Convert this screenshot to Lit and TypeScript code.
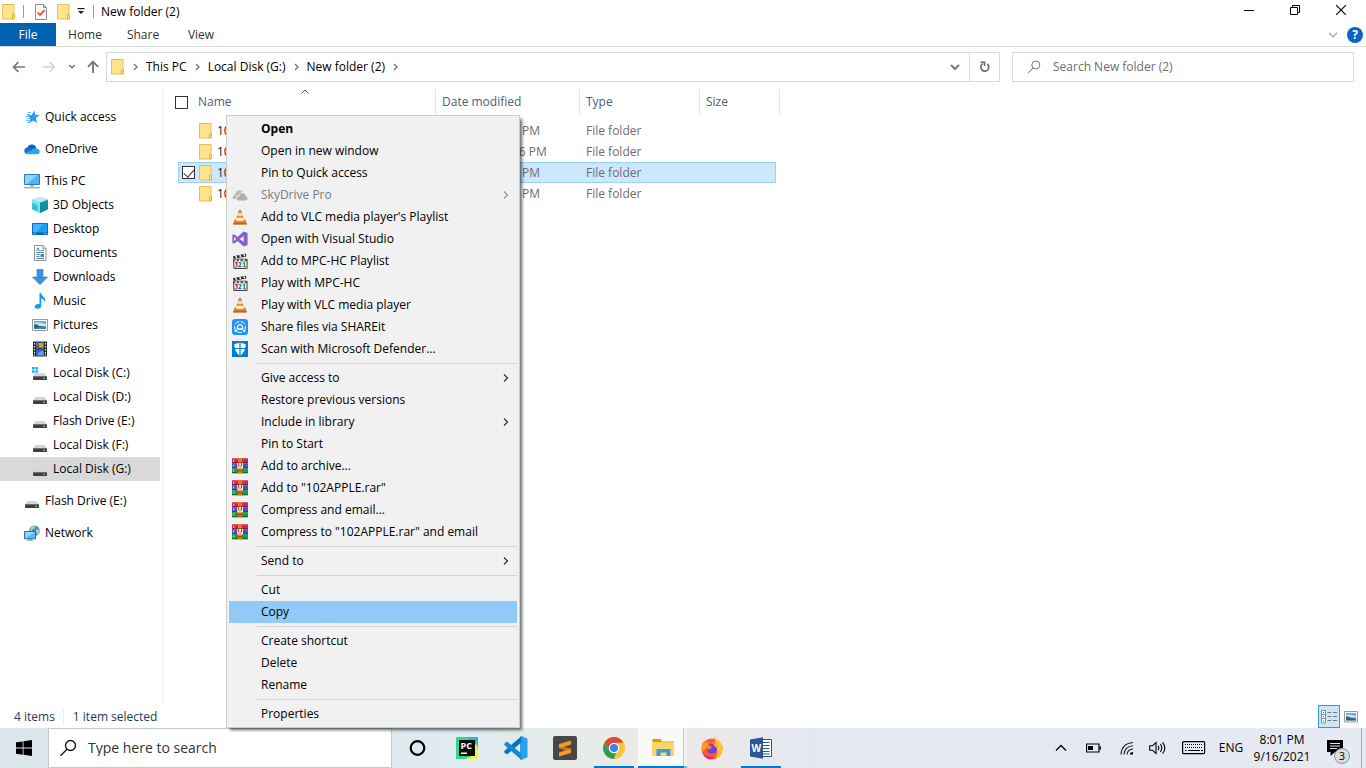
import { LitElement, html, css, svg, nothing, TemplateResult } from "lit";
import { customElement, property, state } from "lit/decorators.js";
import { classMap } from "lit/directives/class-map.js";

type Glyph = { w: number; h: number; body: TemplateResult };

const cone = svg`
  <path d="M7 1.5h2l3.6 9.5H3.4z" fill="#f08a1d"/>
  <path d="M6 4.5h4l.9 2.3H5.1zM4.4 8.7h7.2l.8 1.9H3.6z" fill="#f6ece0"/>
  <path d="M7.2.8h1.6l.6 1.7H6.6z" fill="#8d8f94"/>
  <path d="M2.6 10.5h10.8l1.4 4.8H1.2z" fill="#e57c14"/>
  <path d="M4 10h8l.4 1.500q-4.400 1.500-8.800 0z" fill="#f9e3cc"/>
  <path d="M1.4 14.2h13.2l.3 1.3H1.1z" fill="#b85c0c"/>`;

const clapper = svg`
  <path d="M1 3.2 13.8.8l.6 2.6L1.6 5.8z" fill="#222"/>
  <path d="m3 3 1.6-.3.9 2-1.7.3zM7 2.2l1.7-.3.8 2-1.6.3zM11 1.5l1.6-.3.8 1.9-1.5.3z" fill="#f4f4f4"/>
  <path d="M1.5 6.2h13.6v9.3H1.9z" fill="#e8ebee" stroke="#333" stroke-width=".9"/>
  <path d="M2 6.6h12.8v1.6H2z" fill="#444"/>
  <path d="M3.2 6.6h1.6v1.6H3.2zM7 6.6h1.6v1.6H7zM11 6.6h1.6v1.6H11z" fill="#fff"/>
  <path d="M3 9.6h2.3l-1 1.6q1.6.5.6 2t-2.1.4" fill="none" stroke="#d0392b" stroke-width="1.1"/>
  <path d="M6.8 10.2q1.8-1.4 2.1.1 0 1-2 3.3h2.4" fill="none" stroke="#2870b8" stroke-width="1.1"/>
  <path d="m11 10.3 1.4-.8v4.2m-1.3 0H14" fill="none" stroke="#3a8b3a" stroke-width="1.1"/>`;

const drive = svg`
  <path d="M3.2 8h9.6l2 3.2H1.2z" fill="#d4d6d8"/>
  <path d="M1.1 11h13.8v4H1.1z" fill="#3c3f42"/>
  <path d="M1.1 11h13.8v.9H1.1z" fill="#77797c"/>
  <path d="M11 12.7h1.7v1.3H11z" fill="#3df04a"/>`;

const picture = svg`
  <path d="M.5 2.5h15v11H.5z" fill="#fff" stroke="#999"/>
  <path d="M2 4h12v8H2z" fill="#5fa9e6"/>
  <path d="M2 6q4-2 12 1v2H2z" fill="#c9e4f5"/>
  <path d="M2 7.5q3-.8 5.5 1.4L14 10v2H2z" fill="#2e6a66"/>
  <path d="M6 10.6 14 9.4V12H2v-.6z" fill="#4585b5"/>`;

const rar = svg`
  <path d="M0 0h16v5.3H0z" fill="#c9245b"/><path d="M0 0h16v1.2H0z" fill="#e3577f"/><path d="M0 4.3h16v1H0z" fill="#82133a"/>
  <path d="M0 5.3h16v5H0z" fill="#4d51bb"/><path d="M0 9.4h16v.9H0z" fill="#2c2f78"/>
  <path d="M0 10.3h16V15H0z" fill="#1f9a3f"/><path d="M0 14.3h16v1H0z" fill="#0d5c22"/>
  <path d="M1.2 1.8h1v2.2h-1zM1.2 6.4h1v2.2h-1zM1.2 11.4h1v2.2h-1z" fill="#ffe14a"/>
  <path d="M6 0h4.2v15.3H6z" fill="#e8761c"/><path d="M6 4.3h4.2v1H6zM6 12.2h4.2v1H6z" fill="#8e3f0a"/>
  <path d="M5.200 5h5.800v5.300H5.200z" fill="#f6ece8"/><path d="M6.700 5v3.500M9.500 5v3.500" fill="none" stroke="#c03a2c"/><path d="M7.500 7h1.200v3H7.500z" fill="#b9a9a4"/>`;

const globeMonitor = svg`
  <circle cx="10.5" cy="5.8" r="5.3" fill="#4f8fb8"/>
  <path d="M7.2 2.2q3-1.9 4.4-.7-.8 2.4-3 2.8-1 2-2.5 1.5zM12 5l3.400-.8q.6 3-1.600 5.200Q11.600 8 12 5z" fill="#a9d0c8"/>
  <path d="M.5 6.500h11v7.300H.5z" fill="#52bdf5" stroke="#28709f"/>
  <path d="M1 7h9.800L2 13H1z" fill="#8fd7fb"/>
  <path d="M4.500 14h3v1.200h-3zM3 15h6v.8H3z" fill="#8795a1"/>`;

const G: Record<string, Glyph> = {
  folder: { w: 14, h: 16, body: svg`
    <path d="M.5.5h11.500v14.500H.5z" fill="#ffe48f" stroke="#e8c04a"/>
    <path d="M10.500 10.500h2v4.500h-2z" fill="#fbe08a" stroke="#e3b63c"/>` },
  props: { w: 12, h: 16, body: svg`
    <path d="M.5.5h8l3 3v12H.5z" fill="#f8f8f8" stroke="#8c8c8c"/><path d="M8.500.5v3h3" fill="none" stroke="#8c8c8c"/>
    <path d="m2.700 8.500 2.300 2.500 4.500-4.800" fill="none" stroke="#e8501e" stroke-width="1.800"/>` },
  qat: { w: 8, h: 7, body: svg`<path d="M.5 0h7v1.300h-7zM1 3h6L4 6z" fill="#222"/>` },
  min: { w: 10, h: 10, body: svg`<path d="M0 5h10v1H0z" fill="#000"/>` },
  restore: { w: 10, h: 10, body: svg`<path d="M2.500 2V.5h7v7H8M.5 2.500h7v7h-7z" fill="none" stroke="#000"/>` },
  close: { w: 10, h: 10, body: svg`<path d="m0 0 10 10M10 0 0 10" fill="none" stroke="#000" stroke-width="1.100"/>` },
  chevDownThin: { w: 10, h: 6, body: svg`<path d="m1 .8 4 4 4-4" fill="none" stroke="#999" stroke-width="1.200"/>` },
  chevDown: { w: 10, h: 7, body: svg`<path d="m1 1 4 4 4-4" fill="none" stroke="#777" stroke-width="2"/>` },
  chevSmall: { w: 8, h: 6, body: svg`<path d="m1.200 1 2.800 2.800L6.800 1" fill="none" stroke="#777" stroke-width="1.500"/>` },
  chevRight: { w: 5, h: 8, body: svg`<path d="m1 1 3 3-3 3" fill="none" stroke="#777" stroke-width="1.400"/>` },
  menuArrow: { w: 6, h: 10, body: svg`<path d="m1 1.500 3.500 3.500L1 8.500" fill="none" stroke="currentColor" stroke-width="1.200" opacity=".8"/>` },
  sortUp: { w: 8, h: 5, body: svg`<path d="m.5 4.500 3.500-3.500 3.500 3.500" fill="none" stroke="#555"/>` },
  back: { w: 14, h: 12, body: svg`<path d="M13 6H2M6.500 1l-5 5 5 5" fill="none" stroke="#777" stroke-width="1.700"/>` },
  forward: { w: 14, h: 12, body: svg`<path d="M1 6h11M7.500 1l5 5-5 5" fill="none" stroke="#d2d2d2" stroke-width="1.500"/>` },
  up: { w: 12, h: 14, body: svg`<path d="M6 13V2M1 6.800 6 1.700l5 5.100" fill="none" stroke="#777" stroke-width="1.900"/>` },
  refresh: { w: 12, h: 12, body: svg`<path d="M4 2.600A4 4 0 1 0 8.300 3" fill="none" stroke="#666" stroke-width="1.600"/><path d="M1.600 1.200h4V5" fill="none" stroke="#666" stroke-width="1.500"/>` },
  search: { w: 14, h: 14, body: svg`<circle cx="8.800" cy="5" r="4" fill="none" stroke="#777"/><path d="M6 8 1 13" stroke="#777" fill="none"/>` },
  bigSearch: { w: 18, h: 18, body: svg`<circle cx="11.500" cy="6.500" r="5" fill="none" stroke="#111" stroke-width="1.300"/><path d="M8 10.200 1.500 16.700" stroke="#111" stroke-width="1.300" fill="none"/>` },
  star: { w: 16, h: 16, body: svg`
    <path d="m10.500 1.500.7 4.300 4.500.2-3.700 3 1 5-3.800-2.600L5 14.300l1.200-4.800L3.500 6l4 .2z" fill="#2b9ceb"/>
    <path d="M4 3.500h3M2.500 5.500h3M1.500 7.500h4M2.500 9.500h3M2 11.500h3.500M3 13.500h2" stroke="#6bbdf3"/>` },
  cloud: { w: 16, h: 16, body: svg`
    <path d="M3 8.500q.5-5 5-5 3.500.2 4.500 3.700l-5 2.500z" fill="#0b62bd"/>
    <path d="M.3 10q0-3.500 3.700-3.600l5.500 3-6 3.600Q.5 13 .3 10z" fill="#1274d1"/>
    <path d="M7 9.500q2.500-3 6-1.800 2.700.3 2.700 2.900 0 2.600-2.700 2.600h-9q-1.700 0-3-1.200z" fill="#2ba5ea"/>` },
  pc: { w: 16, h: 16, body: svg`
    <path d="M.5 1.500h15v10H.5z" fill="#4db4f5" stroke="#2d7cae"/><path d="M1 2h13L3 11H1z" fill="#8fd2fa"/>
    <path d="M6 12h4v1.500H6z" fill="#9aa5ae"/><path d="M0 14.200h16v1.100H0z" fill="#8795a1"/>` },
  cube: { w: 16, h: 16, body: svg`
    <path d="m8 0 8 2.800v9.500L8 16l-8-3.700V2.800z" fill="#38c0d4"/><path d="m8 5.500 8-2.700v9.500L8 16z" fill="#0e8fa8"/>
    <path d="m0 2.800 8 2.700V16l-2.500-1.200V8L0 6z" fill="#7fe0ea"/><path d="m8 0 8 2.800-8 2.700-8-2.700z" fill="#b6eff4"/>` },
  desktop: { w: 16, h: 16, body: svg`
    <path d="M.5 2.500h15v11H.5z" fill="#1c9df5" stroke="#0b6fbe"/><path d="M1 3h10l-6 8H1z" fill="#3fb3ff"/>
    <path d="M1 11.500h14V13H1z" fill="#0a5ea8"/><path d="M2 12h1.500v.8H2zM11.500 12h1v.8h-1zM13.300 12h1v.8h-1z" fill="#fff"/>` },
  doc: { w: 16, h: 16, body: svg`
    <path d="M2.500.5h8.500l3 3v12H2.500z" fill="#fff" stroke="#8b9299"/><path d="M10.800.5v3.200H14" fill="none" stroke="#8b9299"/>
    <path d="M4.500 6 6 2.800 7.500 6" stroke="#2a86cf" fill="none"/><path d="M8.500 5.500H12M4.500 7.500H12M4.500 9.500h3M4.500 11.500h3M4.500 13.500H12" stroke="#5d7f9d"/>
    <path d="M8.500 9H12v3H8.500z" fill="#2a86cf"/>` },
  download: { w: 16, h: 16, body: svg`<path d="M5 .5h6V8h4.500L8 15.700.5 8H5z" fill="#3a92e4"/><path d="M5 .5h6V8h4.500L8 15.700.5 8H5z" fill="none" stroke="#2d7ac5" stroke-width=".6"/>` },
  music: { w: 16, h: 16, body: svg`<path d="M7.500 0H9q.4 2.300 2.800 4 2.600 2.400.8 5.500.2-3-3.300-4.200v7.200Q9 15.800 5.700 15.800q-3.500-.3-3-2.800Q3.800 10.500 7.500 11z" fill="#139bf0"/>` },
  picture: { w: 16, h: 16, body: picture },
  video: { w: 16, h: 16, body: svg`
    <path d="M1 .5h14v15H1z" fill="#2b2b2b"/><path d="M4 1.500h8v6H4z" fill="#3c7ee0"/><path d="M4 8.500h8v6H4z" fill="#3268c4"/>
    <path d="M7 2h4v4H7z" fill="#c9a227"/><path d="m4 6 3-3v4.500H4z" fill="#8b4a32"/><path d="m6 12 4-2.500 2 3v2H6z" fill="#54a3ea"/>
    <path d="M2 2h1v1.500H2zm0 3h1v1.500H2zm0 3h1v1.500H2zm0 3h1v1.500H2zm0 2.700h1V15H2zM13 2h1v1.500h-1zm0 3h1v1.500h-1zm0 3h1v1.500h-1zm0 3h1v1.500h-1zm0 2.700h1V15h-1z" fill="#eee"/>` },
  drive: { w: 16, h: 16, body: drive },
  winDrive: { w: 16, h: 16, body: svg`${drive}<path d="M0 2h2.700v2.500H0zM3.400 2h2.700v2.500H3.400zM0 5.200h2.700v2.500H0zM3.400 5.200h2.700v2.500H3.400z" fill="#1fb3ee"/>` },
  network: { w: 16, h: 16, body: globeMonitor },
  skydrive: { w: 16, h: 16, body: svg`
    <path d="M1 12q-1.500-3.300 2-4.200Q3.500 3.600 7.500 3.200q2.300.1 3 1.800-2.800.5-3.400 3Q3.800 8.200 4 12z" fill="#b9b9b9"/>
    <path d="M6.500 13.500Q4 13 4.800 10.500 5.700 9 7.400 9.300 7.800 6 11 6.200q2.300.4 2.500 2.700 2.300.5 2 2.800-.4 1.600-2 1.800z" fill="#b0b0b0"/>` },
  cone: { w: 16, h: 16, body: cone },
  vs: { w: 16, h: 16, body: svg`<path fill-rule="evenodd" d="M11.600.4 15.600 2v12l-4 1.600-6-5.700-3.500 2.800L.4 12V4l1.700-.7 3.500 2.800zM2.100 6v4l2-2zm9.500-1L7.800 8l3.800 3z" fill="#8661c5"/>` },
  clapper: { w: 16, h: 16, body: clapper },
  shareit: { w: 16, h: 16, body: svg`
    <rect width="16" height="16" rx="3" fill="#1f93fb"/><circle cx="8" cy="8" r="5.500" fill="none" stroke="#fff" stroke-dasharray="5 1.500"/>
    <path d="M5.500 10V7.600q2.500-4.600 5 0V10z" fill="none" stroke="#fff" stroke-width="1.300"/><circle cx="3.800" cy="11.800" r="1.200" fill="#fff"/><circle cx="12.300" cy="11.800" r="1.200" fill="#fff"/>` },
  defender: { w: 16, h: 16, body: svg`<path d="M0 0h16v16H0z" fill="#0a78d7"/><path d="M8 1.300q2.700 1.600 5.700 1.600 0 8-5.700 11.600Q2.300 10.900 2.300 2.900 5.300 2.900 8 1.300z" fill="#fff"/><path d="M8 1v14M2 7.500h12" stroke="#0a78d7" stroke-width="1.200"/>` },
  rar: { w: 16, h: 16, body: rar },
  details: { w: 16, h: 14, body: svg`
    <path d="M.5.5h4v12.500h-4zM.5 4.500h4M.5 8.500h4" fill="#fff" stroke="#8a8a8a"/>
    <path d="M2 2h1v1H2z" fill="#2a6fb5"/><path d="M2 6h1v1H2z" fill="#2a86cf"/><path d="M2 10.500h1v1H2z" fill="#c33"/>
    <path d="M6.500 2.500h4m1.500 0h4M6.500 6.500h4m1.500 0h4M6.500 10.500h4m1.500 0h4" stroke="#777"/>` },
  thumb: { w: 14, h: 12, body: svg`
    <path d="M.5.5h13v10.500H.5z" fill="#fff" stroke="#999"/><path d="M2 2h10v7.500H2z" fill="#5fa9e6"/><path d="M2 4q4-1.500 10 1v1.500H2z" fill="#c9e4f5"/><path d="M2 5.500q2.500-.5 4.500 1.300L12 7.800v1.700H2z" fill="#2e6a66"/>` },
  windows: { w: 16, h: 16, body: svg`<path d="M0 2.300 6.700 1.400v6.200H0zM7.500 1.300 16 0v7.600H7.500zM0 8.400h6.700v6.300L0 13.700zM7.500 8.400H16V16l-8.500-1.200z" fill="#000"/>` },
  cortana: { w: 18, h: 18, body: svg`<circle cx="8.500" cy="9" r="6.800" fill="none" stroke="#000" stroke-width="2.200"/>` },
  pycharm: { w: 22, h: 22, body: svg`
    <path d="M0 0h22v22H0z" fill="#2fd68c"/><path d="M13 0h9v8z" fill="#1fb8d8"/><path d="m18 0 4 12v10H9l9-4z" fill="#f3ed4c"/><path d="M12 0h7l3 7-4 1z" fill="#25b9d6"/>
    <path d="M3 3h16v16H3z" fill="#0b0b0b"/><path d="M5 15.500h6V17H5z" fill="#fff"/>
    <text x="4.500" y="11.500" font-family="Open Sans, sans-serif" font-weight="700" font-size="9" fill="#fff">PC</text>` },
  vscode: { w: 24, h: 24, body: svg`
    <path d="m17.500 0 6 2.800v18.400l-6 2.800-1.500-1V1z" fill="#2aa3ef"/>
    <path d="m17.500 0-.2 6.500L3 18.500.3 16.500V15z" fill="#0a74bd"/>
    <path d="m17.500 24-.2-6.500L3 5.500.3 7.500V9z" fill="#1789d3"/>` },
  sublime: { w: 24, h: 24, body: svg`
    <rect width="24" height="24" rx="2" fill="#474747"/>
    <path d="M18 4.500v4l-7 2.300 7 2.200v4L6 20.500v-4l6.500-2.200L6 12V8z" fill="#f89820"/><path d="m6 12 6.500 2.300L18 13l-7-2.200z" fill="#c9700e"/>` },
  chrome: { w: 22, h: 22, body: svg`
    <circle cx="11" cy="11" r="11" fill="#f6c63a"/>
    <path d="M1.500 5.500A11 11 0 0 1 20.500 5.500L11 6 6.500 13.500z" fill="#d9483b"/>
    <path d="M1.500 5.500 6.300 13.500 13 15.500 11 22A11 11 0 0 1 1.500 5.500z" fill="#2e9c54"/>
    <circle cx="11" cy="11" r="5.200" fill="#fff"/><circle cx="11" cy="11" r="4" fill="#3f7fe8"/>` },
  explorer: { w: 22, h: 20, body: svg`
    <path d="M.5 1h8l1.500 2H22v15H.5z" fill="#f9c83e"/><path d="M.5 1h8l1.500 3H.5z" fill="#d9980f"/><path d="M.5 4.500H22V18H.5z" fill="#fcd564"/>
    <path d="M4.500 11h14v7h-4v-3.500h-6V18h-4z" fill="#3d9be0"/>` },
  firefox: { w: 24, h: 24, body: svg`
    <circle cx="12" cy="13" r="10.500" fill="#fb5a33"/>
    <path d="M14 .5q3 3.500 6 5 3.700 5 2 11-2.500 5.500-8 7 5-5 2.500-12z" fill="#ffc531"/>
    <path d="M2.500 5.500q1.200 1.500 3 1.500l3-2-.5 4-5 7q-2-5-.5-10.500z" fill="#ff9b23"/>
    <path d="M3 17q5 5 12 3.500-3 3.500-7 2.500-4-1.500-5-6z" fill="#e52c6b"/>
    <circle cx="12" cy="13" r="5" fill="#7540d8"/><path d="M6 11q3-3 6 0-1 2.200-4.500 2.500z" fill="#ff8a2a"/><path d="M12 6q5 1 6 6l-3-1z" fill="#ffa72c"/>` },
  word: { w: 22, h: 22, body: svg`
    <path d="M12 2.500h9.500v17H12z" fill="#fff" stroke="#2b579a"/>
    <path d="M13 5.500h6.500M13 8.500h6.500M13 11.500h6.500M13 14.500h6.500M13 17h6.500" stroke="#2b579a"/>
    <path d="m0 2.500 13-2.300v21.600L0 19.500z" fill="#2b579a"/>
    <text x="1.500" y="14.500" font-family="Open Sans, sans-serif" font-weight="700" font-size="10" fill="#fff">W</text>` },
  trayUp: { w: 12, h: 8, body: svg`<path d="m1 6.500 5-5 5 5" fill="none" stroke="#000" stroke-width="1.300"/>` },
  battery: { w: 16, h: 10, body: svg`<path d="M.5 1h12.500v8H.5z" fill="none" stroke="#000" stroke-width="1.200"/><path d="M2 3h5v4H2zM13.500 3.500H15v3h-1.500z" fill="#000"/>` },
  wifi: { w: 14, h: 14, body: svg`<path d="M1 13.500Q1.500 2.500 13 1.500M4 13.500Q4.500 5.500 13 4.700M7 13.500q.5-5 6-5.500" fill="none" stroke="#222" stroke-width="1.100"/><path d="M9.800 13.500q.2-2.500 3.200-2.500v2.500z" fill="#000"/>` },
  volume: { w: 18, h: 14, body: svg`<path d="M.7 4.800h2.800L7 1.500v11L3.500 9.200H.7z" fill="none" stroke="#000" stroke-width="1.100"/><path d="M9 4.800q1.600 2.200 0 4.400M11.300 3q3 4 0 8M13.600 1.300q4.500 5.700 0 11.400" fill="none" stroke="#000" stroke-width="1.100"/>` },
  keyboard: { w: 24, h: 14, body: svg`<rect x=".6" y=".6" width="22" height="12" rx="1" fill="none" stroke="#000" stroke-width="1.200"/><path d="M3 3.500h18M3 6.500h18" stroke="#000" stroke-dasharray="1 1"/><path d="M3 9.500h1.500m1.500 0h12m1 0h2" stroke="#000"/>` },
  notice: { w: 16, h: 17, body: svg`<path d="M0 0h16v12H8l-4.500 4v-4H0z" fill="#000"/><path d="M3 3.500h10M3 6h10M3 8.500h7" stroke="#e6eaf2"/>` },
};

const icon = (name: string, cls = "") => {
  const g = G[name];
  return html`<svg class="icon ${cls}" width=${g.w} height=${g.h} viewBox="0 0 ${g.w} ${g.h}" aria-hidden="true">${g.body}</svg>`;
};

const shared = css`
  * { box-sizing: border-box; }
  button, input { font: inherit; color: inherit; border: 0; padding: 0; margin: 0; background: none; outline: 0; }
  a { color: inherit; text-decoration: none; }
  ul { list-style: none; margin: 0; padding: 0; }
  .icon { display: block; flex: none; }
`;

type NavEntry = { label: string; icon: string; current?: boolean; children?: NavEntry[] };

const NAV: NavEntry[] = [
  { label: "Quick access", icon: "star" },
  { label: "OneDrive", icon: "cloud" },
  {
    label: "This PC", icon: "pc", children: [
      { label: "3D Objects", icon: "cube" },
      { label: "Desktop", icon: "desktop" },
      { label: "Documents", icon: "doc" },
      { label: "Downloads", icon: "download" },
      { label: "Music", icon: "music" },
      { label: "Pictures", icon: "picture" },
      { label: "Videos", icon: "video" },
      { label: "Local Disk (C:)", icon: "winDrive" },
      { label: "Local Disk (D:)", icon: "drive" },
      { label: "Flash Drive (E:)", icon: "drive" },
      { label: "Local Disk (F:)", icon: "drive" },
      { label: "Local Disk (G:)", icon: "drive", current: true },
    ],
  },
  { label: "Flash Drive (E:)", icon: "drive" },
  { label: "Network", icon: "network" },
];

@customElement("nav-pane")
export class NavPane extends LitElement {
  static styles = [shared, css`
    :host { display: block; width: 163px; flex: none; padding-top: 18px; border-right: 1px solid #f3f3f3; }
    .groups { display: flex; flex-direction: column; gap: 8px; }
    .link { display: flex; align-items: center; gap: 5px; height: 24px; padding-left: 24px; margin-right: 2px; white-space: nowrap; }
    .child { padding-left: 32px; }
    .current { background: #d9d9d9; }
  `];
  private row(e: NavEntry, child = false) {
    return html`<a href="#" class=${classMap({ link: true, child, current: !!e.current })}>${icon(e.icon)}<span>${e.label}</span></a>`;
  }
  render() {
    return html`<nav aria-label="Folders"><ul class="groups">${NAV.map(e => html`<li>${this.row(e)}
      ${e.children ? html`<ul>${e.children.map(c => html`<li>${this.row(c, true)}</li>`)}</ul>` : nothing}</li>`)}</ul></nav>`;
  }
}

const FILES = [
  { name: "100APPLE", date: "9/6/2021 7:42 PM" },
  { name: "101APPLE", date: "9/6/2021 12:46 PM" },
  { name: "102APPLE", date: "9/6/2021 7:44 PM" },
  { name: "103APPLE", date: "9/6/2021 7:45 PM" },
];

@customElement("file-list")
export class FileList extends LitElement {
  @state() private selected = "102APPLE";
  static styles = [shared, css`
    :host { display: block; flex: 1; min-width: 0; padding: 2px 0 0 11px; }
    .table { border-collapse: separate; border-spacing: 0; table-layout: fixed; width: 606px; }
    .gutter { width: 4px; } .c-name { width: 258px; } .c-date { width: 144px; } .c-type { width: 120px; } .c-size { width: 76px; } .c-end { width: 4px; }
    th { height: 26px; padding: 0 0 0 6px; font-weight: 400; text-align: left; color: #4c607a; border-right: 1px solid #e5e5e5; }
    .th-name { padding-left: 1px; }
    .th-in { display: flex; align-items: center; gap: 10px; position: relative; height: 26px; }
    .sort { position: absolute; left: 126px; top: 0; }
    .spacer { height: 5px; padding: 0; }
    td { height: 21px; padding: 0 0 0 6px; color: #6d6d6d; white-space: nowrap; }
    .file { display: flex; align-items: center; color: #222; padding-left: 4px; gap: 4px; }
    .cell-name, .pad { padding: 0; }
    .box { appearance: none; width: 13px; height: 13px; border: 1px solid #333; background: #fff; flex: none; display: grid; place-items: center; }
    .box:checked::after { content: ""; width: 9px; height: 5px; border: solid #333; border-width: 0 0 1px 1px; transform: translateY(-1px) rotate(-48deg); }
    .hidden { visibility: hidden; }
    .sel td:not(.pad) { background: #cce8ff; border: solid #99d1ff; border-width: 1px 0; }
    .sel .cell-name { border-left-width: 1px !important; }
    .sel .file { padding-left: 3px; }
    .sel .cell-size { border-right-width: 1px !important; }
  `];
  render() {
    return html`<table class="table">
      <colgroup><col class="gutter"><col class="c-name"><col class="c-date"><col class="c-type"><col class="c-size"><col class="c-end"></colgroup>
      <thead><tr>
        <th class="th-name" colspan="2"><div class="th-in"><input class="box" type="checkbox" aria-label="Select all"><span>Name</span>${icon("sortUp", "sort")}</div></th>
        <th>Date modified</th><th>Type</th><th colspan="2">Size</th>
      </tr></thead>
      <tbody>
        <tr><td class="spacer" colspan="6"></td></tr>
        ${FILES.map(f => {
          const sel = f.name === this.selected;
          return html`<tr class=${classMap({ sel })} @click=${() => { this.selected = f.name; }}>
            <td class="pad"></td>
            <td class="cell-name"><div class="file"><input class=${classMap({ box: true, hidden: !sel })} type="checkbox" .checked=${sel} aria-label=${f.name}>${icon("folder")}<span>${f.name}</span></div></td>
            <td>${f.date}</td><td>File folder</td><td class="cell-size"></td><td class="pad"></td></tr>`;
        })}
      </tbody></table>`;
  }
}

type Entry = { label: string; icon?: string; bold?: boolean; disabled?: boolean; sub?: boolean; hot?: boolean } | null;

const MENU: Entry[] = [
  { label: "Open", bold: true },
  { label: "Open in new window" },
  { label: "Pin to Quick access" },
  { label: "SkyDrive Pro", icon: "skydrive", disabled: true, sub: true },
  { label: "Add to VLC media player's Playlist", icon: "cone" },
  { label: "Open with Visual Studio", icon: "vs" },
  { label: "Add to MPC-HC Playlist", icon: "clapper" },
  { label: "Play with MPC-HC", icon: "clapper" },
  { label: "Play with VLC media player", icon: "cone" },
  { label: "Share files via SHAREit", icon: "shareit" },
  { label: "Scan with Microsoft Defender...", icon: "defender" },
  null,
  { label: "Give access to", sub: true },
  { label: "Restore previous versions" },
  { label: "Include in library", sub: true },
  { label: "Pin to Start" },
  { label: "Add to archive...", icon: "rar" },
  { label: "Add to \"102APPLE.rar\"", icon: "rar" },
  { label: "Compress and email...", icon: "rar" },
  { label: "Compress to \"102APPLE.rar\" and email", icon: "rar" },
  null,
  { label: "Send to", sub: true },
  null,
  { label: "Cut" },
  { label: "Copy", hot: true },
  null,
  { label: "Create shortcut" },
  { label: "Delete" },
  { label: "Rename" },
  null,
  { label: "Properties" },
];

@customElement("context-menu")
export class ContextMenu extends LitElement {
  static styles = [shared, css`
    :host { display: block; width: 294px; padding: 2px; background: #f1f1f1; border: 1px solid #ccc; box-shadow: 3px 3px 3px -1px rgba(0, 0, 0, .6); color: #000; }
    .item { display: grid; grid-template-columns: 16px 1fr 6px; column-gap: 13px; align-items: center; width: 100%; height: 22px; padding: 0 8px 0 3px; text-align: left; white-space: nowrap; }
    .bold { font-weight: 700; }
    .item:disabled { color: #7a7a7a; }
    .hot, .item:enabled:hover { background: #91c9f7; }
    .rule { height: 1px; margin: 3px 0 3px 28px; background: #d2d2d2; }
  `];
  render() {
    return html`<div role="menu">${MENU.map(m => m
      ? html`<button role="menuitem" ?disabled=${!!m.disabled} class=${classMap({ item: true, bold: !!m.bold, hot: !!m.hot })}>
          ${m.icon ? icon(m.icon) : html`<span></span>`}<span>${m.label}</span>${m.sub ? icon("menuArrow") : nothing}</button>`
      : html`<div class="rule" role="separator"></div>`)}</div>`;
  }
}

const APPS = [
  { name: "Cortana", icon: "cortana" },
  { name: "PyCharm", icon: "pycharm" },
  { name: "Visual Studio Code", icon: "vscode" },
  { name: "Sublime Text", icon: "sublime" },
  { name: "Chrome", icon: "chrome", running: true },
  { name: "File Explorer", icon: "explorer", active: true },
  { name: "Firefox", icon: "firefox" },
  { name: "Word", icon: "word", running: true },
];

@customElement("task-bar")
export class TaskBar extends LitElement {
  @property() time = "8:01 PM";
  @property() date = "9/16/2021";
  static styles = [shared, css`
    :host { display: flex; height: 40px; flex: none; background: linear-gradient(90deg, #dbe7ea 0, #dfebee 35%, #e9ebe7 44%, #ece9e8 50%, #e3e8f1 60%, #e6eaf2 100%); color: #000; }
    .start { width: 48px; display: grid; place-items: center; flex: none; }
    .search { width: 344px; display: flex; align-items: center; gap: 11px; padding-left: 10px; background: #fff; border: 1px solid #c6c9cb; font-size: 14px; }
    .search-input { flex: 1; min-width: 0; }
    .search-input::placeholder { color: #333; opacity: 1; }
    .apps { display: flex; padding-left: 1px; }
    .app { width: 49px; display: grid; place-items: center; position: relative; }
    .running::after { content: ""; position: absolute; left: 5px; right: 4px; bottom: 0; height: 2px; background: #0078d7; }
    .active { background: linear-gradient(90deg, #f9f9f7 45px, #c8c8c8 45px, #c8c8c8 46px, #f1f1ef 46px); }
    .active::after { content: ""; position: absolute; left: 0; right: 0; bottom: 0; height: 2px; background: linear-gradient(90deg, #0078d7 46px, #76b9ed 46px); }
    .tray { display: flex; align-items: center; margin-left: auto; }
    .tray-btn { display: grid; place-items: center; height: 40px; }
    .w-up { width: 28px; } .w-bat { width: 38px; } .w-wifi { width: 28px; } .w-vol { width: 34px; } .w-key { width: 37px; } .w-lang { width: 38px; }
    .clock { width: 64px; line-height: 17px; text-align: center; }
    .notice { width: 41px; position: relative; }
    .badge { position: absolute; left: 20px; top: 20px; width: 16px; height: 16px; border-radius: 50%; border: 1px solid #8f9296; background: #dcdddf; font-size: 11px; line-height: 14px; text-align: center; }
    .peek { width: 5px; height: 40px; border-left: 1px solid #a9adb3; margin-left: 6px; }
  `];
  render() {
    return html`
      <button class="start" aria-label="Start">${icon("windows")}</button>
      <label class="search">${icon("bigSearch")}<input class="search-input" type="text" placeholder="Type here to search" aria-label="Type here to search"></label>
      <div class="apps">${APPS.map(a => html`<button class=${classMap({ app: true, running: !!a.running, active: !!a.active })} aria-label=${a.name}>${icon(a.icon)}</button>`)}</div>
      <div class="tray">
        <button class="tray-btn w-up" aria-label="Show hidden icons">${icon("trayUp")}</button>
        <button class="tray-btn w-bat" aria-label="Battery">${icon("battery")}</button>
        <button class="tray-btn w-wifi" aria-label="Network">${icon("wifi")}</button>
        <button class="tray-btn w-vol" aria-label="Volume">${icon("volume")}</button>
        <button class="tray-btn w-key" aria-label="Touch keyboard">${icon("keyboard")}</button>
        <button class="tray-btn w-lang">ENG</button>
        <button class="clock"><div>${this.time}</div><div>${this.date}</div></button>
        <button class="tray-btn notice" aria-label="Notifications">${icon("notice")}<span class="badge">3</span></button>
        <button class="peek" aria-label="Show desktop"></button>
      </div>`;
  }
}

@customElement("app-root")
export class AppRoot extends LitElement {
  static styles = [shared, css`
    :host { display: flex; flex-direction: column; height: 100vh; overflow: hidden; position: relative; background: #fff; color: #000; font: 12px/16px "Open Sans", "Noto Sans", sans-serif; }
    .title { display: flex; align-items: center; height: 23px; flex: none; padding-left: 2px; }
    .divider { width: 1px; height: 13px; background: #999; }
    .quick { display: flex; align-items: center; }
    .d1 { margin: 0 11px 0 7px; }
    .q2 { margin: 0 6px 0 10px; }
    .d2 { margin: 0 7px 0 8px; }
    .window { display: flex; margin-left: auto; padding-right: 2px; align-self: flex-start; }
    .win-btn { width: 46px; height: 20px; display: grid; place-items: center; }
    .ribbon { display: flex; height: 24px; flex: none; border-bottom: 1px solid #dadbdc; color: #333; align-items: stretch; }
    .tab { width: 58px; text-align: center; }
    .file-tab { width: 56px; background: #0063b1; color: #fff; }
    .help { display: flex; align-items: center; gap: 9px; margin-left: auto; padding-right: 3px; }
    .help-btn { width: 16px; height: 16px; border-radius: 50%; background: #0a66c2; color: #fff; font-weight: 700; text-align: center; }
    .address { display: flex; align-items: center; padding: 5px 12px 5px 12px; height: 40px; flex: none; }
    .nav-btn { display: grid; place-items: center; height: 30px; }
    .n-back { width: 14px; margin-right: 16px; } .n-fwd { width: 14px; margin-right: 12px; } .n-hist { width: 8px; margin-right: 11px; } .n-up { width: 12px; margin-right: 7px; }
    .path { display: flex; align-items: center; flex: 1; min-width: 0; height: 30px; border: 1px solid #d9d9d9; padding-left: 4px; }
    .crumbs { display: flex; align-items: center; gap: 8px; padding-left: 8px; flex: 1; min-width: 0; white-space: nowrap; }
    .drop { width: 28px; }
    .refresh { width: 30px; height: 28px; border-left: 1px solid #d9d9d9; }
    .find { display: flex; align-items: center; gap: 12px; width: 342px; height: 30px; margin-left: 12px; padding-left: 14px; border: 1px solid #d9d9d9; }
    .find-input { flex: 1; min-width: 0; }
    .find-input::placeholder { color: #6d6d6d; opacity: 1; }
    .body { display: flex; flex: 1; min-height: 0; }
    .status { display: flex; align-items: center; height: 23px; flex: none; color: #1e395b; padding: 0 4px 0 14px; }
    .status-count { padding-right: 8px; border-right: 1px solid #eee; margin-right: 9px; }
    .views { display: flex; align-items: center; margin-left: auto; }
    .view { width: 22px; height: 23px; display: grid; place-items: center; }
    .view-on { background: #c9e7f7; border: 1px solid #26a0da; }
    .menu { position: absolute; left: 226px; top: 115px; z-index: 2; }
  `];
  render() {
    return html`
      <header class="title">
        ${icon("folder")}<span class="divider d1"></span>
        <div class="quick">
          <button aria-label="Properties">${icon("props")}</button>
          <button class="q2" aria-label="New folder">${icon("folder")}</button>
          <button aria-label="Customize toolbar">${icon("qat")}</button>
        </div>
        <span class="divider d2"></span><span>New folder (2)</span>
        <div class="window">
          <button class="win-btn" aria-label="Minimize">${icon("min")}</button>
          <button class="win-btn" aria-label="Restore">${icon("restore")}</button>
          <button class="win-btn" aria-label="Close">${icon("close")}</button>
        </div>
      </header>
      <div class="ribbon">
        <button class="file-tab">File</button>
        <button class="tab">Home</button><button class="tab">Share</button><button class="tab">View</button>
        <div class="help"><button aria-label="Expand ribbon">${icon("chevDownThin")}</button><button class="help-btn" aria-label="Help">?</button></div>
      </div>
      <div class="address">
        <button class="nav-btn n-back" aria-label="Back">${icon("back")}</button>
        <button class="nav-btn n-fwd" aria-label="Forward">${icon("forward")}</button>
        <button class="nav-btn n-hist" aria-label="Recent locations">${icon("chevSmall")}</button>
        <button class="nav-btn n-up" aria-label="Up">${icon("up")}</button>
        <div class="path">${icon("folder")}
          <div class="crumbs">${icon("chevRight")}<a href="#">This PC</a>${icon("chevRight")}<a href="#">Local Disk (G:)</a>${icon("chevRight")}<a href="#">New folder (2)</a>${icon("chevRight")}</div>
          <button class="nav-btn drop" aria-label="Previous locations">${icon("chevDown")}</button>
          <button class="nav-btn refresh" aria-label="Refresh">${icon("refresh")}</button>
        </div>
        <label class="find">${icon("search")}<input class="find-input" type="text" placeholder="Search New folder (2)" aria-label="Search New folder (2)"></label>
      </div>
      <main class="body"><nav-pane></nav-pane><file-list></file-list></main>
      <footer class="status">
        <span class="status-count">4 items</span><span>1 item selected</span>
        <div class="views"><button class="view view-on" aria-label="Details view">${icon("details")}</button><button class="view" aria-label="Large icons view">${icon("thumb")}</button></div>
      </footer>
      <task-bar></task-bar>
      <context-menu class="menu"></context-menu>`;
  }
}
